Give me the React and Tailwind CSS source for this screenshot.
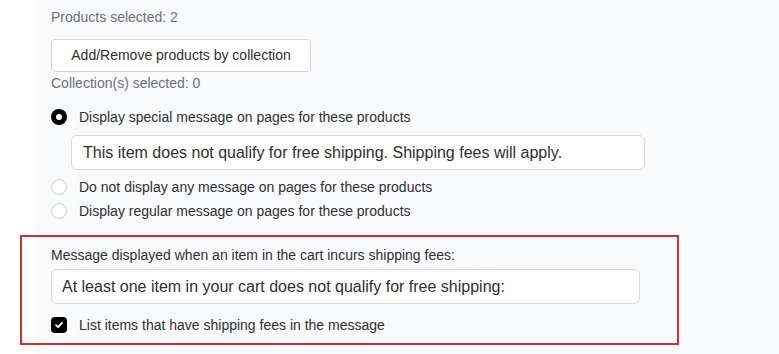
export default function App() {
  const font = { fontFamily: '"Liberation Sans", Arial, sans-serif' };

  return (
    <div className="flex min-h-[354px] bg-white" style={font}>
      <div className="w-[36px] shrink-0" />
      <div className="flex-1 bg-[#f9fafb] pl-[15px] pt-[8px] pb-[9px]">
        <p className="text-[14px] leading-[18px] text-[#6d7175]">Products selected: 2</p>

        <button className="mt-[13px] flex h-[33px] w-[260px] items-center justify-center rounded-[4px] border border-[#d4d4d8] bg-white text-[14px] text-[#303030]">
          Add/Remove products by collection
        </button>
        <p className="mt-[2px] text-[14px] leading-[18px] text-[#6d7175]">Collection(s) selected: 0</p>

        <label className="mt-[16px] flex h-[18px] items-center gap-[12px] text-[14px] text-[#303030]">
          <span className="flex h-[16px] w-[16px] items-center justify-center rounded-full bg-black">
            <span className="h-[6px] w-[6px] rounded-full bg-white" />
          </span>
          Display special message on pages for these products
        </label>

        <div className="ml-[20px] mt-[9px] flex h-[35px] w-[574px] items-center rounded-[6px] border border-[#d9d9d9] bg-white px-[11px] text-[16px] text-[#303030]">
          This item does not qualify for free shipping. Shipping fees will apply.
        </div>

        <label className="mt-[8px] flex h-[18px] items-center gap-[12px] text-[14px] text-[#303030]">
          <span className="h-[16px] w-[16px] rounded-full border border-[#cfcfcf] bg-white" />
          Do not display any message on pages for these products
        </label>
        <label className="mt-[6px] flex h-[18px] items-center gap-[12px] text-[14px] text-[#303030]">
          <span className="h-[16px] w-[16px] rounded-full border border-[#cfcfcf] bg-white" />
          Display regular message on pages for these products
        </label>

        <div className="-ml-[31px] mt-[15px] w-[659px] border-2 border-[#d32f2f] pb-[9px] pl-[29px] pt-[9px]">
          <p className="text-[14px] leading-[18px] text-[#303030]">
            Message displayed when an item in the cart incurs shipping fees:
          </p>
          <div className="mt-[5px] flex h-[35px] w-[589px] items-center rounded-[6px] border border-[#d9d9d9] bg-white px-[10px] text-[16px] text-[#303030]">
            At least one item in your cart does not qualify for free shipping:
          </div>
          <label className="mt-[12px] flex h-[18px] items-center gap-[12px] text-[14px] text-[#303030]">
            <span className="flex h-[16px] w-[16px] items-center justify-center rounded-[4px] bg-black">
              <svg width="10" height="10" viewBox="0 0 10 10" fill="none">
                <path d="M2 5.2 L4.1 7.2 L8 2.8" stroke="white" strokeWidth="1.8" strokeLinecap="round" strokeLinejoin="round" />
              </svg>
            </span>
            List items that have shipping fees in the message
          </label>
        </div>
      </div>
    </div>
  );
}
